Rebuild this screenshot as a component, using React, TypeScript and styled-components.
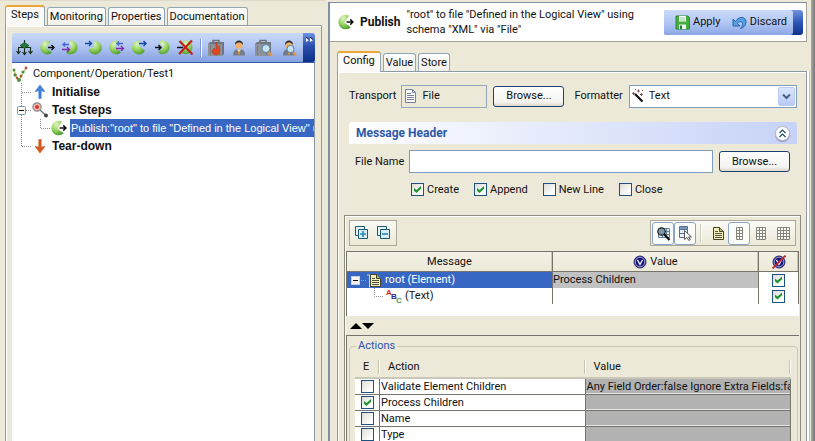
import React, { ReactNode } from 'react';
import styled, { createGlobalStyle, css } from 'styled-components';

const UI = 'Roboto, "DejaVu Sans", sans-serif';
const TREE = '"Liberation Sans", Arial, sans-serif';
const FACE = '#ece9d8';
const FRAME = '#8b9aa6';
const BLUE = '#3767c2';

const Global = createGlobalStyle`
  *, *::before, *::after { box-sizing: border-box; }
  body { margin: 0; background: ${FACE}; color: #111; font: 11px/14px ${UI}; }
  button, input, select { font: inherit; color: inherit; margin: 0; padding: 0; }
  svg { display: block; flex: none; }
`;

const Window = styled.div`
  display: flex;
  height: 100vh;
  overflow: hidden;
  white-space: nowrap;
`;

const Sidebar = styled.aside`
  flex: 0 0 40%;
  min-width: 0;
  display: flex;
  flex-direction: column;
  padding: 4px 4px 0 5px;
  border-top: 1px solid #dedbcd;
`;

const Tabs = styled.div`
  display: flex;
  align-items: flex-end;
  gap: 2px;
`;

const Tab = styled.button<{ $active?: boolean }>`
  height: 18px;
  padding: 0 2px;
  border: 1px solid #91a7b4;
  border-bottom: 0;
  border-radius: 3px 3px 0 0;
  background: linear-gradient(#fff, #f1f0e8);
  font-size: 11px;
  line-height: 17px;
  ${(p) =>
    p.$active &&
    css`
      height: 21px;
      padding: 0 5px 3px;
      margin-bottom: -1px;
      border-top: 2px solid #eba63a;
      background: #fbfaf6;
      line-height: 16px;
      z-index: 1;
    `}
`;

const SidePanel = styled.section`
  flex: 1;
  min-height: 0;
  display: flex;
  flex-direction: column;
  padding: 7px 6px 0;
  border: 1px solid ${FRAME};
  border-bottom: 0;
  box-shadow: inset 1px 1px #fff;
`;

const StepBar = styled.div`
  display: flex;
  height: 30px;
  border-bottom: 1px solid #3d5da5;
  background: linear-gradient(#c9d9f8, #b2c6f3 45%, #839fe0);
  border-radius: 3px 3px 0 0;
`;

const StepTools = styled.div`
  flex: 1;
  display: flex;
  align-items: center;
  gap: 6px;
  padding: 0 4px;
`;

const ToolButton = styled.button`
  display: flex;
  border: 0;
  background: none;
`;

const ToolRule = styled.span<{ $light?: boolean }>`
  width: 2px;
  height: 18px;
  border-left: 1px solid ${(p) => (p.$light ? '#cfccbc' : '#7b97d6')};
  border-right: 1px solid #fff;
`;

const PhotoTools = styled.div`
  display: flex;
  align-items: center;
  gap: 8px;
`;

const MoreButton = styled.button`
  width: 12px;
  display: flex;
  justify-content: center;
  padding-top: 4px;
  border: 0;
  border-radius: 0 3px 3px 0;
  background: linear-gradient(#6f94e4, #2a50ad 45%, #0b2f86);
`;

const TreePane = styled.div`
  flex: 1;
  min-height: 0;
  overflow: hidden;
  padding-top: 2px;
  border-right: 1px solid ${FRAME};
  background: #fff;
`;

const Tree = styled.ul`
  list-style: none;
  margin: 0;
  padding: 0;
`;

const TreeRow = styled.li`
  display: flex;
  align-items: center;
  height: 18px;
`;

const TreeIcon = styled.span<{ $gap: number }>`
  display: flex;
  padding-right: ${(p) => p.$gap}px;
`;

const TreeText = styled.span<{ $kind: 'root' | 'step' | 'selected' }>`
  font: ${(p) => (p.$kind === 'root' ? `11px/18px ${UI}` : p.$kind === 'step' ? `bold 12px/18px ${TREE}` : `11px/18px ${TREE}`)};
  ${(p) =>
    p.$kind === 'selected' &&
    css`
      flex: 1;
      overflow: hidden;
      padding-left: 1px;
      background: ${BLUE};
      color: #fff;
    `}
`;

const Main = styled.main`
  flex: 1;
  min-width: 0;
  display: flex;
  flex-direction: column;
  margin: 2px 8px 0 2px;
  border: solid #8190a0;
  border-width: 1px 0 0 2px;
`;

const WindowEdge = styled.div`
  width: 4px;
  margin-left: -4px;
  background: linear-gradient(90deg, #aaa, #777);
`;

const EditorHead = styled.header`
  display: flex;
  align-items: center;
  height: 39px;
  padding: 0 3px 0 7px;
  border-right: 1px solid #a5a398;
  border-bottom: 1px solid #a5a398;
  background: #fff;
`;

const EditorTitle = styled.h1`
  margin: 0 6px 0 5px;
  font-size: 12px;
  font-weight: bold;
`;

const Summary = styled.p`
  flex: 1;
  max-width: 258px;
  margin: 0 auto 0 0;
  line-height: 15px;
`;

const ApplyBar = styled.div`
  display: flex;
  height: 25px;
  width: 139px;
  border-radius: 3px;
  background: linear-gradient(#7295df, #2c55b5 50%, #0d3389);
`;

const ApplyTools = styled.div`
  flex: 1;
  margin-right: 10px;
  display: flex;
  align-items: center;
  justify-content: space-between;
  padding: 0 6px 0 11px;
  border-radius: 3px;
  background: linear-gradient(#cbdaf9, #b3c7f4 50%, #8ba7e6);
`;

const ApplyButton = styled.button`
  display: flex;
  align-items: center;
  gap: 3px;
  border: 0;
  background: none;
  font-size: 11px;
`;

const EditorTabs = styled(Tabs)`
  padding: 9px 0 0 7px;
`;

const Editor = styled.section`
  flex: 1;
  min-height: 0;
  margin-left: 7px;
  border: 1px solid ${FRAME};
  border-bottom: 0;
  box-shadow: inset 1px 1px #fff, 2px 0 #fff, 3px 0 #c5c2b4;
  padding: 12px 5px 0 6px;
  display: flex;
  flex-direction: column;
`;

const TransportRow = styled.div`
  display: flex;
  align-items: center;
  height: 24px;
  padding: 0 4px 0 5px;
`;

const FieldLabel = styled.label`
  flex: none;
  margin-right: 5px;
`;

const FileField = styled.output`
  flex: 0 1 86px;
  height: 23px;
  display: flex;
  align-items: center;
  gap: 5px;
  padding-left: 2px;
  margin-right: 6px;
  border: 1px solid #93a9bb;
`;

const Browse = styled.button`
  flex: none;
  width: 71px;
  height: 21px;
  border: 1px solid #1f4070;
  border-radius: 3px;
  background: linear-gradient(#fff, #f4f3ee 80%, #dad6cb);
`;

const FormatterLabel = styled(FieldLabel)`
  margin-left: 10px;
  margin-right: 6px;
`;

const SelectBox = styled.div`
  flex: 1;
  display: grid;
  grid-template-columns: 20px 1fr 17px;
  align-items: center;
  height: 23px;
  padding: 0 1px 0 2px;
  border: 1px solid #7f9db9;
  background: #fff;
  & > * { grid-row: 1; }
`;

const Select = styled.select`
  grid-column: 1 / -1;
  appearance: none;
  height: 21px;
  padding-left: 17px;
  border: 0;
  background: none;
  outline: 0;
`;

const SelectIcon = styled.span`
  grid-column: 1;
  pointer-events: none;
`;

const SelectArrow = styled.span`
  grid-column: 3;
  display: flex;
  align-items: center;
  justify-content: center;
  height: 19px;
  border: 1px solid #b9cbf3;
  border-radius: 2px;
  background: linear-gradient(#dce6fd, #b7caf5);
  pointer-events: none;
`;

const SectionHead = styled.div`
  display: flex;
  align-items: center;
  justify-content: space-between;
  height: 22px;
  margin: 14px 4px 0 5px;
  padding: 0 7px;
  border-radius: 3px 3px 0 0;
  background: linear-gradient(90deg, #fff, #c6d2f7);
`;

const SectionTitle = styled.h2`
  margin: 0;
  color: #2e58a6;
  font-size: 12px;
  font-weight: bold;
`;

const Collapse = styled.button`
  display: flex;
  align-items: center;
  justify-content: center;
  width: 15px;
  height: 15px;
  border: 1px solid #b3b8c8;
  border-radius: 50%;
  background: #fff;
  box-shadow: 0 1px 1px #8d94ae;
`;

const FileRow = styled.div`
  display: flex;
  align-items: center;
  height: 23px;
  margin: 6px 11px 0;
`;

const TextBox = styled.input`
  flex: 1;
  min-width: 0;
  height: 23px;
  margin-right: 6px;
  padding: 0 4px;
  border: 1px solid #7f9db9;
  background: #fff;
`;

const CheckRow = styled.div`
  display: flex;
  gap: 15px;
  height: 13px;
  margin: 10px 0 19px 67px;
`;

const CheckLabel = styled.label`
  display: flex;
  align-items: center;
  gap: 3px;
`;

const CheckInput = styled.input`
  appearance: none;
  flex: none;
  display: block;
  width: 13px;
  height: 13px;
  border: 1px solid #1c5180;
  background: linear-gradient(135deg, #dcdcd7, #fff 80%);
  &:checked::after {
    content: '';
    display: block;
    width: 7px;
    height: 7px;
    margin: 2px;
    background: #21932b;
    clip-path: polygon(0 28%, 36% 58%, 100% 0, 100% 40%, 36% 100%, 0 68%);
  }
`;

const MessagePane = styled.section`
  border: solid #8d8b80;
  border-width: 1px 1px 0 1px;
  box-shadow: inset 1px 1px #fff;
  padding: 4px 1px 0;
  flex: 1;
  min-height: 0;
  overflow: hidden;
`;

const PaneTools = styled.div`
  display: flex;
  justify-content: space-between;
  padding: 0 3px 5px 3px;
`;

const ToolBox = styled.div`
  display: flex;
  align-items: center;
  height: 26px;
  border: 1px solid #aca899;
  padding: 0 1px;
  background: linear-gradient(#fbfaf5, #ece9d8);
`;

const BoxButton = styled.button<{ $pressed?: boolean }>`
  display: flex;
  align-items: center;
  justify-content: center;
  width: 22px;
  height: 23px;
  border: 1px solid ${(p) => (p.$pressed ? '#8aa5c4' : 'transparent')};
  border-radius: 3px;
  background: ${(p) => (p.$pressed ? '#fbfbf9' : 'none')};
`;

const BoxRule = styled(ToolRule)`
  margin: 0 4px;
`;

const TableWell = styled.div`
  height: 65px;
  border-top: 1px solid #77756b;
  border-left: 1px solid #77756b;
  background: #fff;
`;

const MessageTable = styled.table`
  width: 100%;
  table-layout: fixed;
  border-collapse: separate;
  border-spacing: 0;
`;

const MessageHead = styled.th`
  height: 20px;
  padding: 0;
  border-right: 1px solid #77756b;
  border-bottom: 1px solid #77756b;
  background: linear-gradient(#f4f2e6, ${FACE});
  box-shadow: inset -1px 0 #c9c6b6;
  font-weight: normal;
`;

const HeadContent = styled.span`
  display: flex;
  align-items: center;
  justify-content: center;
  gap: 3px;
`;

const MessageCell = styled.td<{ $tone?: 'selected' | 'grey' }>`
  height: 16px;
  padding: 0;
  border-right: 1px solid #77756b;
  line-height: 16px;
  background: ${(p) => (p.$tone === 'selected' ? BLUE : p.$tone === 'grey' ? '#c1c1c1' : '#fff')};
  color: ${(p) => (p.$tone === 'selected' ? '#fff' : '#111')};
`;

const NodeLine = styled.span<{ $gap: number }>`
  display: flex;
  align-items: center;
  gap: ${(p) => p.$gap}px;
  height: 16px;
`;

const CellCheck = styled.span`
  display: flex;
  justify-content: center;
`;

const Arrows = styled.div`
  display: flex;
  padding: 7px 0 5px 4px;
  height: 19px;
`;

const ActionsPane = styled.div`
  border: solid #77756b;
  border-width: 1px 0 0 1px;
  padding: 3px 1px 0 2px;
`;

const Actions = styled.fieldset`
  min-width: 0;
  margin: 0;
  padding: 4px 6px 8px 5px;
  border: 1px solid #cbc8b6;
  border-radius: 4px;
`;

const Legend = styled.legend`
  margin-left: 1px;
  padding: 0 2px;
  color: #2c52b4;
  line-height: 14px;
`;

const ActionHead = styled.th`
  height: 22px;
  padding: 0 0 0 8px;
  border-bottom: 2px solid #cbc7b8;
  background: linear-gradient(90deg, transparent calc(100% - 2px), #c7c5b2 0, #c7c5b2 calc(100% - 1px), #fff 0) no-repeat 0 3px / 100% 14px;
  font-weight: normal;
  text-align: left;
`;

const ActionCell = styled.td<{ $grey?: boolean }>`
  height: 16px;
  padding: 0 0 0 1px;
  overflow: hidden;
  border-right: 1px solid #77756b;
  border-bottom: 1px solid #77756b;
  line-height: 15px;
  background: ${(p) => (p.$grey ? '#b2b2b2' : '#fff')};
  ${(p) => p.$grey && 'box-shadow: inset 0 -1px #e6e6e6;'}
`;

type Dir = 'right' | 'swapIn' | 'intoLeft' | 'swapOut' | 'outTop' | 'into' | 'cross';

const BODY: Record<Dir, string> = {
  right: 'M11.500 2.500A6.900 6.900 0 1 0 13 13.500L7 9Z',
  outTop: 'M9 1.700A6.900 6.900 0 1 0 14 11.500L8 7Z',
  swapOut: 'M10 1.700A6.900 6.900 0 1 0 13 13.500L7 8Z',
  intoLeft: 'M9.500 1.700A6.900 6.900 0 1 1 3.500 11L9 8Z',
  swapIn: 'M7 1.700A6.900 6.900 0 1 1 4 13.500L9 8.500Z',
  into: 'M5 2.500A6.900 6.900 0 1 1 4 13.500L9 8.500Z',
  cross: 'M5 2.500A6.900 6.900 0 1 1 4 13.500L9 8.500Z',
};

const Ball = ({ kind, size = 17 }: { kind: Dir; size?: number }) => (
  <svg width={size} height={size} viewBox="0 0 17 17" aria-hidden="true">
    <defs>
      <radialGradient id={'ball-' + kind} cx="40%" cy="25%" r="80%">
        <stop offset="0" stopColor="#dff5c4" />
        <stop offset=".5" stopColor="#9bd564" />
        <stop offset="1" stopColor="#4a9a2c" />
      </radialGradient>
    </defs>
    <path fill={`url(#ball-${kind})`} d={BODY[kind]} />
    {kind === 'right' && <path d="M9 8.500h6M12.500 6l2.500 2.500-2.500 2.500" stroke="#111" strokeWidth="1.400" fill="none" />}
    {kind === 'into' && <path d="M1 8.500h6M4.500 6L7 8.500 4.500 11" stroke="#111" strokeWidth="1.400" fill="none" />}
    {kind === 'intoLeft' && <path d="M0 4.500h6.500M4 2l2.500 2.500L4 7" stroke="#1748b0" strokeWidth="1.400" fill="none" />}
    {kind === 'outTop' && <path d="M8 4.500h7M12.500 2L15 4.500 12.500 7" stroke="#1748b0" strokeWidth="1.400" fill="none" />}
    {kind === 'swapIn' && (
      <g fill="none" strokeWidth="1.300">
        <path d="M7 5.500H1M3 3.500l-2 2 2 2" stroke="#4a64cc" />
        <path d="M0 10.500h7.500M5 8l2.500 2.500L5 13" stroke="#8428a8" />
      </g>
    )}
    {kind === 'swapOut' && (
      <g fill="none" strokeWidth="1.300">
        <path d="M15 4.500H9M11 2.500l-2 2 2 2" stroke="#4a64cc" />
        <path d="M8 9.500h7.500M13 7l2.500 2.500L13 12" stroke="#8428a8" />
      </g>
    )}
    {kind === 'cross' && (
      <>
        <path d="M0 8.500h6" stroke="#111" strokeWidth="1.500" />
        <path d="M2.500 2l13 13.500M15 1.500L2 15" stroke="#bb2418" strokeWidth="2.200" />
      </>
    )}
  </svg>
);

const FlowIcon = () => (
  <svg width="17" height="17" viewBox="0 0 17 17" aria-hidden="true">
    <path d="M8.500 1v14M2.500 14V8.500h12V14M.5 12l2 2.500 2-2.500M6.500 13l2 2.500 2-2.500M12.500 12l2 2.500 2-2.500" stroke="#152a17" strokeWidth="1.100" fill="none" />
    <path d="M8.500 3.500l4.500 3-4.500 3-4.500-3z" fill="#247a35" stroke="#153b1c" strokeWidth=".6" />
  </svg>
);

const CaseIcon = ({ lens }: { lens?: boolean }) => (
  <svg width={lens ? 19 : 16} height="18" viewBox={lens ? '0 0 19 18' : '0 0 16 18'} aria-hidden="true">
    <path d="M5 4V1.500h6V4" fill="none" stroke="#6d7078" strokeWidth="1.500" />
    <path d="M0 5l2-2h14v12l-2 2H0z" fill="#70757e" />
    <path d="M0 5h14v12H0z" fill="#8e939b" />
    <path d="M2.500 6v10M11.500 6v10" stroke="#777b83" />
    {lens ? (
      <>
        <circle cx="11" cy="9.500" r="4" fill="#c7e3f6" stroke="#5480a4" />
        <path d="M13.500 13l3.500 4" stroke="#e4944a" strokeWidth="2.200" />
      </>
    ) : (
      <path d="M8 3c0 3 4 4 4 8s-2 5-4 5-4-2-4-4 2-1 2-3c1 1 1 2 2 2 1-3-1-5 0-8z" fill="#dc4a25" stroke="#a8321a" strokeWidth=".5" />
    )}
  </svg>
);

const PersonIcon = ({ lens }: { lens?: boolean }) => (
  <svg width="15" height="18" viewBox="0 0 15 18" aria-hidden="true">
    <path d="M1 16.500c0-4.500 2-6.500 6-6.500s6 2 6 6.500z" fill="#747a86" />
    <path d="M5 10.500l2 3 2-3z" fill="#fff" />
    <path d="M6.500 11.500h1l.7 4H5.800z" fill="#d8942b" />
    <circle cx="7" cy="6" r="3.800" fill="#eeb06e" />
    <path d="M3 6c-.5-6 8.500-6 8 0-1-2-3-2.500-4-2.500S4 4 3 6z" fill="#30302f" />
    {lens && (
      <>
        <circle cx="8.500" cy="10" r="3.600" fill="#c7e3f6" stroke="#5480a4" />
        <path d="M11 13l3 3.500" stroke="#e4944a" strokeWidth="2" />
      </>
    )}
  </svg>
);

const MoreIcon = () => (
  <svg width="9" height="6" viewBox="0 0 9 6" aria-hidden="true">
    <path d="M1 1v4l3-2zM5 1v4l3-2z" fill="#fff" />
    <path d="M1 0l3 2.500M5 0l3 2.500" stroke="#0a1c4a" />
  </svg>
);

const TreeRootIcon = () => (
  <svg width="17" height="17" viewBox="0 0 17 17" aria-hidden="true">
    <path d="M2 5l4 8M14 2L7 14" stroke="#c9b778" strokeWidth="1.200" />
    <g fill="#4d9440">
      <circle cx="2" cy="4" r="1.500" />
      <circle cx="3" cy="9" r="1.700" />
      <circle cx="11" cy="6" r="1.600" />
      <circle cx="7" cy="14" r="2" />
    </g>
    <g fill="#b5523a">
      <circle cx="14" cy="2" r="1.400" />
      <circle cx="9" cy="10" r="1.500" />
      <circle cx="5" cy="12" r="1.300" />
    </g>
  </svg>
);

const StepArrow = ({ down }: { down?: boolean }) => (
  <svg width="16" height="16" viewBox="0 0 16 16" aria-hidden="true">
    {down ? (
      <path d="M6.800 1.500h2.400v7.800l3.800-1L8 15 3 8.300l3.800 1z" fill="#da5a1d" stroke="#b84510" strokeWidth=".5" />
    ) : (
      <path d="M6.800 14.500h2.400V6.700l3.800 1L8 1 3 7.700l3.800-1z" fill="#4583df" stroke="#2f69c4" strokeWidth=".5" />
    )}
  </svg>
);

const ProbeIcon = () => (
  <svg width="17" height="17" viewBox="0 0 17 17" aria-hidden="true">
    <path d="M7.500 7.500l7 6.500" stroke="#777" strokeWidth="1.500" />
    <circle cx="5" cy="5" r="4.200" fill="#f2b8ae" stroke="#8b8f96" strokeWidth="1.200" />
    <circle cx="5" cy="5" r="2" fill="#d03c2c" />
    <circle cx="14" cy="13.500" r="2" fill="#454545" />
  </svg>
);

const dots = { stroke: '#8c8c8c', strokeDasharray: '1 1', fill: 'none' };

const Guide = ({ kind }: { kind: 'tee' | 'box' | 'line' | 'end' | 'elbow' }) => (
  <svg width={kind === 'elbow' ? 18 : 20} height="18" viewBox={kind === 'elbow' ? '0 0 18 18' : '0 0 20 18'} aria-hidden="true">
    {kind === 'elbow' && <path d="M8.500 0v9.500H18" {...dots} />}
    {(kind === 'tee' || kind === 'box') && <path d="M9.500 0v18M10 9.500h10" {...dots} />}
    {kind === 'line' && <path d="M9.500 0v18" {...dots} />}
    {kind === 'end' && <path d="M9.500 0v9.500H20" {...dots} />}
    {kind === 'box' && (
      <>
        <rect x="5.500" y="5.500" width="8" height="8" rx="1" fill="#f8f7f2" stroke="#7898b5" />
        <path d="M7 9.500h5" stroke="#111" />
      </>
    )}
  </svg>
);

const DiskIcon = () => (
  <svg width="15" height="15" viewBox="0 0 15 15" aria-hidden="true">
    <path d="M1 1h12l1.500 1.500V14H1z" fill="#45ae40" stroke="#2a8a2c" />
    <path d="M4 1h7v5.500H4z" fill="#fff" />
    <path d="M5 3h5M5 5h5" stroke="#8fc98f" />
    <path d="M4 9.500h7V14H4z" fill="#eef6ee" />
    <path d="M5 10.500h2V14H5z" fill="#257c2a" />
  </svg>
);

const UndoIcon = () => (
  <svg width="15" height="15" viewBox="0 0 15 15" aria-hidden="true">
    <path d="M1 4v7h7L5.500 8.500C7 6 10 6 10.500 8.500c.3 2-.5 3.500-2 5 3.500-1 5.500-3.500 5.500-6.500C14 1.500 7 .5 3.500 6.500z" fill="#57a2e4" stroke="#1d5ca8" strokeWidth=".9" />
  </svg>
);

const PageIcon = () => (
  <svg width="13" height="14" viewBox="0 0 13 14" aria-hidden="true">
    <path d="M1.500.5h7l3 3v10h-10z" fill="#fff" stroke="#7583a0" />
    <path d="M8.500.5v3h3M3 4.500h4M3 6.500h7M3 8.500h7M3 10.500h7" stroke="#7583a0" fill="none" />
  </svg>
);

const WandIcon = () => (
  <svg width="13" height="14" viewBox="0 0 13 14" aria-hidden="true">
    <path d="M3 5l7.500 7.500" stroke="#111" strokeWidth="2.200" />
    <path d="M0 4.500h3M1.500 3v3M5 2h3M6.500.5v3M8 5.500h3M9.500 4v3M3 .5h1M10 1.500h1" stroke="#8a5a55" />
  </svg>
);

const Chevron = () => (
  <svg width="9" height="7" viewBox="0 0 9 7" aria-hidden="true">
    <path d="M1 1.500l3.500 3.500L8 1.500" stroke="#4d6185" strokeWidth="2" fill="none" />
  </svg>
);

const CollapseIcon = () => (
  <svg width="9" height="9" viewBox="0 0 9 9" aria-hidden="true">
    <path d="M1.500 4l3-3 3 3M1.500 8l3-3 3 3" stroke="#1a4a66" strokeWidth="1.200" fill="none" />
  </svg>
);

const StackIcon = ({ plus }: { plus?: boolean }) => (
  <svg width="14" height="14" viewBox="0 0 14 14" aria-hidden="true">
    <path d="M.5.5h9v9h-9z" fill="#e7f4f8" stroke="#1d5876" />
    <path d="M3.500 3.500h9v9h-9z" fill="#d9f0fa" stroke="#1d5876" />
    <path d={plus ? 'M5 8h6M8 5v6' : 'M5 8h6'} stroke="#2b87b8" strokeWidth="1.600" />
  </svg>
);

const GridIcon = ({ cols }: { cols: number }) => {
  const w = cols * 3;
  const inner = Array.from({ length: cols - 1 }, (_, i) => `M${i * 3 + 3}.5 0v13`).join('');
  return (
    <svg width={w + 1} height="13" viewBox={`0 0 ${w + 1} 13`} aria-hidden="true">
      <path d={`M.5 .5h${w}v12h-${w}zM0 3.5h${w}M0 6.5h${w}M0 9.5h${w}${inner}`} fill="#fbfbf8" stroke="#85857c" />
    </svg>
  );
};

const FindIcon = () => (
  <svg width="15" height="15" viewBox="0 0 15 15" aria-hidden="true">
    <path d="M2.500 2.500h11v9h-11zM2 5.500h12M2 8.500h12M6.500 2v10M10.500 2v10" fill="#dfeaf0" stroke="#5f7f94" />
    <circle cx="5.500" cy="5.500" r="3.700" fill="#7f97a6" stroke="#222" strokeWidth="1.200" />
    <path d="M8 8l5.500 6" stroke="#111" strokeWidth="2.200" />
  </svg>
);

const PickIcon = () => (
  <svg width="15" height="16" viewBox="0 0 15 16" aria-hidden="true">
    <path d="M1.500 1.500h8v3h-8zM1.500 4.500h8v4h-8zM1.500 8.500h8v4h-8z" fill="#e8eff6" stroke="#55708c" />
    <path d="M2 2h7v2H2z" fill="#7898b8" />
    <path d="M6.500 5.500l7 6.500h-3l1.800 2.500-1.500 1-1.800-3-2.500 2z" fill="#fff" stroke="#444" strokeWidth=".9" />
  </svg>
);

const DocIcon = ({ shadow }: { shadow?: boolean }) => (
  <svg width="15" height="15" viewBox="0 0 15 15" aria-hidden="true">
    {shadow && <path d="M0 1.500h3v13H2V2.500H0z" fill="#d8d7a8" />}
    <path d="M3.500 1.500h6l4 4v8h-10z" fill="#f0efbb" stroke="#45452c" />
    <path d="M9.500 1.500v4h4" fill="#b5b36a" stroke="#45452c" />
    <path d="M5 5.500h3M5 7.500h7M5 9.500h7M5 11.500h7" stroke="#55553a" />
  </svg>
);

const ValidIcon = ({ off }: { off?: boolean }) => (
  <svg width="14" height="14" viewBox="0 0 14 14" aria-hidden="true">
    <circle cx="7" cy="7" r="6" fill="#15157c" stroke="#2c2c6a" />
    <circle cx="7" cy="7" r="4.800" fill="none" stroke="#c9cbe8" strokeWidth=".8" />
    <path d="M4.500 5l2.500 4.500L9.500 5" stroke="#fff" strokeWidth="1.300" fill="none" />
    {off && <path d="M.5 13.500L13.500.5" stroke="#c0272d" strokeWidth="1.800" />}
  </svg>
);

/* Small three-colour letter badge that marks a text node. */
const AbcIcon = () => (
  <svg width="16" height="15" viewBox="0 0 16 15" fontFamily={TREE} fontWeight="bold" aria-hidden="true">
    <text x="0" y="6" fontSize="8" fill="#d22828">A</text>
    <text x="5" y="10" fontSize="8" fill="#25259c">B</text>
    <text x="10" y="14" fontSize="8" fill="#3fa05a">C</text>
  </svg>
);

const NodeGuide = ({ open }: { open?: boolean }) => (
  <svg width={open ? 20 : 37} height="16" viewBox={open ? '0 0 20 16' : '0 0 37 16'} aria-hidden="true">
    {open ? (
      <>
        <path d="M12 8.500h8" stroke="#86a5de" strokeDasharray="1 1" />
        <rect x="4.500" y="4.500" width="8" height="8" fill="#f5f3ea" stroke="#c3d2e8" />
        <path d="M6 8.500h5" stroke="#111" />
      </>
    ) : (
      <path d="M27.500 0v8.500H37" {...dots} />
    )}
  </svg>
);

const Triangle = ({ down }: { down?: boolean }) => (
  <svg width="12" height="6" viewBox="0 0 12 6" aria-hidden="true">
    <path d={down ? 'M0 0h12L6 6z' : 'M0 6h12L6 0z'} fill="#000" />
  </svg>
);

const Check = ({ label, checked }: { label: string; checked?: boolean }) => (
  <CheckLabel>
    <CheckInput type="checkbox" defaultChecked={checked} />
    {label}
  </CheckLabel>
);

const Step = ({ guide, icon, gap = 3, kind, children }: { guide?: ReactNode; icon: ReactNode; gap?: number; kind: 'root' | 'step' | 'selected'; children: ReactNode }) => (
  <TreeRow>
    {guide}
    <TreeIcon $gap={gap}>{icon}</TreeIcon>
    <TreeText $kind={kind}>{children}</TreeText>
  </TreeRow>
);

const BALLS: { kind: Dir; label: string }[] = [
  { kind: 'right', label: 'Publish' },
  { kind: 'swapIn', label: 'Receive request' },
  { kind: 'intoLeft', label: 'Subscribe' },
  { kind: 'swapOut', label: 'Send request' },
  { kind: 'outTop', label: 'Send reply' },
  { kind: 'into', label: 'Receive reply' },
  { kind: 'cross', label: 'Unsubscribe' },
];

const ACTIONS = [
  { name: 'Validate Element Children', value: 'Any Field Order:false Ignore Extra Fields:false', on: false },
  { name: 'Process Children', value: '', on: true },
  { name: 'Name', value: '', on: false },
  { name: 'Type', value: '', on: false },
];

export default function App() {
  return (
    <>
      <Global />
      <Window>
        <Sidebar>
          <Tabs>
            <Tab $active>Steps</Tab>
            <Tab>Monitoring</Tab>
            <Tab>Properties</Tab>
            <Tab>Documentation</Tab>
          </Tabs>
          <SidePanel>
            <StepBar>
              <StepTools>
                <ToolButton aria-label="Flow"><FlowIcon /></ToolButton>
                {BALLS.map((b) => (
                  <ToolButton key={b.kind} aria-label={b.label}><Ball kind={b.kind} /></ToolButton>
                ))}
                <ToolRule />
                <PhotoTools>
                  <ToolButton aria-label="Case"><CaseIcon /></ToolButton>
                  <ToolButton aria-label="User"><PersonIcon /></ToolButton>
                  <ToolButton aria-label="Find case"><CaseIcon lens /></ToolButton>
                  <ToolButton aria-label="Find user"><PersonIcon lens /></ToolButton>
                </PhotoTools>
              </StepTools>
              <MoreButton aria-label="More"><MoreIcon /></MoreButton>
            </StepBar>
            <TreePane>
              <Tree>
                <Step kind="root" gap={4} icon={<TreeRootIcon />}>Component/Operation/Test1</Step>
                <Step kind="step" gap={4} guide={<Guide kind="tee" />} icon={<StepArrow />}>Initialise</Step>
                <Step kind="step" guide={<Guide kind="box" />} icon={<ProbeIcon />}>Test Steps</Step>
                <Step
                  kind="selected"
                  gap={2}
                  guide={<><Guide kind="line" /><Guide kind="elbow" /></>}
                  icon={<Ball kind="right" size={18} />}
                >
                  Publish:"root" to file "Defined in the Logical View" using
                </Step>
                <Step kind="step" gap={4} guide={<Guide kind="end" />} icon={<StepArrow down />}>Tear-down</Step>
              </Tree>
            </TreePane>
          </SidePanel>
        </Sidebar>

        <Main>
          <EditorHead>
            <Ball kind="right" size={18} />
            <EditorTitle>Publish</EditorTitle>
            <Summary>
              "root" to file "Defined in the Logical View" using
              <br />
              schema "XML" via "File"
            </Summary>
            <ApplyBar>
              <ApplyTools>
                <ApplyButton><DiskIcon />Apply</ApplyButton>
                <ApplyButton><UndoIcon />Discard</ApplyButton>
              </ApplyTools>
            </ApplyBar>
          </EditorHead>

          <EditorTabs>
            <Tab $active>Config</Tab>
            <Tab>Value</Tab>
            <Tab>Store</Tab>
          </EditorTabs>

          <Editor>
            <TransportRow>
              <FieldLabel htmlFor="transport">Transport</FieldLabel>
              <FileField id="transport"><PageIcon />File</FileField>
              <Browse>Browse...</Browse>
              <FormatterLabel htmlFor="formatter">Formatter</FormatterLabel>
              <SelectBox>
                <Select id="formatter" defaultValue="Text"><option>Text</option></Select>
                <SelectIcon><WandIcon /></SelectIcon>
                <SelectArrow><Chevron /></SelectArrow>
              </SelectBox>
            </TransportRow>

            <SectionHead>
              <SectionTitle>Message Header</SectionTitle>
              <Collapse aria-label="Collapse"><CollapseIcon /></Collapse>
            </SectionHead>
            <FileRow>
              <FieldLabel htmlFor="filename">File Name</FieldLabel>
              <TextBox id="filename" type="text" />
              <Browse>Browse...</Browse>
            </FileRow>
            <CheckRow>
              <Check label="Create" checked />
              <Check label="Append" checked />
              <Check label="New Line" />
              <Check label="Close" />
            </CheckRow>

            <MessagePane>
              <PaneTools>
                <ToolBox>
                  <BoxButton aria-label="Expand all"><StackIcon plus /></BoxButton>
                  <BoxButton aria-label="Collapse all"><StackIcon /></BoxButton>
                </ToolBox>
                <ToolBox>
                  <BoxButton $pressed aria-label="Find"><FindIcon /></BoxButton>
                  <BoxButton $pressed aria-label="Pick"><PickIcon /></BoxButton>
                  <BoxRule $light />
                  <BoxButton aria-label="Document"><DocIcon /></BoxButton>
                  <BoxButton $pressed aria-label="Two columns"><GridIcon cols={2} /></BoxButton>
                  <BoxButton aria-label="Three columns"><GridIcon cols={3} /></BoxButton>
                  <BoxButton aria-label="Four columns"><GridIcon cols={4} /></BoxButton>
                </ToolBox>
              </PaneTools>

              <TableWell>
                <MessageTable>
                  <colgroup>
                    <col />
                    <col />
                    <col width="40" />
                  </colgroup>
                  <thead>
                    <tr>
                      <MessageHead>Message</MessageHead>
                      <MessageHead><HeadContent><ValidIcon />Value</HeadContent></MessageHead>
                      <MessageHead aria-label="Disable validation"><HeadContent><ValidIcon off /></HeadContent></MessageHead>
                    </tr>
                  </thead>
                  <tbody>
                    <tr>
                      <MessageCell $tone="selected">
                        <NodeLine $gap={3}><NodeLine $gap={0}><NodeGuide open /><DocIcon shadow /></NodeLine>root (Element)</NodeLine>
                      </MessageCell>
                      <MessageCell $tone="grey">Process Children</MessageCell>
                      <MessageCell><CellCheck><CheckInput type="checkbox" defaultChecked aria-label="root" /></CellCheck></MessageCell>
                    </tr>
                    <tr>
                      <MessageCell>
                        <NodeLine $gap={3}><NodeLine $gap={2}><NodeGuide /><AbcIcon /></NodeLine>(Text)</NodeLine>
                      </MessageCell>
                      <MessageCell />
                      <MessageCell><CellCheck><CheckInput type="checkbox" defaultChecked aria-label="Text" /></CellCheck></MessageCell>
                    </tr>
                  </tbody>
                </MessageTable>
              </TableWell>

              <Arrows>
                <ToolButton aria-label="Move up"><Triangle /></ToolButton>
                <ToolButton aria-label="Move down"><Triangle down /></ToolButton>
              </Arrows>

              <ActionsPane>
                <Actions>
                  <Legend>Actions</Legend>
                  <MessageTable>
                    <colgroup>
                      <col width="25" />
                      <col />
                      <col />
                    </colgroup>
                    <thead>
                      <tr>
                        <ActionHead>E</ActionHead>
                        <ActionHead>Action</ActionHead>
                        <ActionHead>Value</ActionHead>
                      </tr>
                    </thead>
                    <tbody>
                      {ACTIONS.map((a) => (
                        <tr key={a.name}>
                          <ActionCell><CellCheck><CheckInput type="checkbox" defaultChecked={a.on} aria-label={a.name} /></CellCheck></ActionCell>
                          <ActionCell>{a.name}</ActionCell>
                          <ActionCell $grey>{a.value}</ActionCell>
                        </tr>
                      ))}
                    </tbody>
                  </MessageTable>
                </Actions>
              </ActionsPane>
            </MessagePane>
          </Editor>
        </Main>
        <WindowEdge />
      </Window>
    </>
  );
}
